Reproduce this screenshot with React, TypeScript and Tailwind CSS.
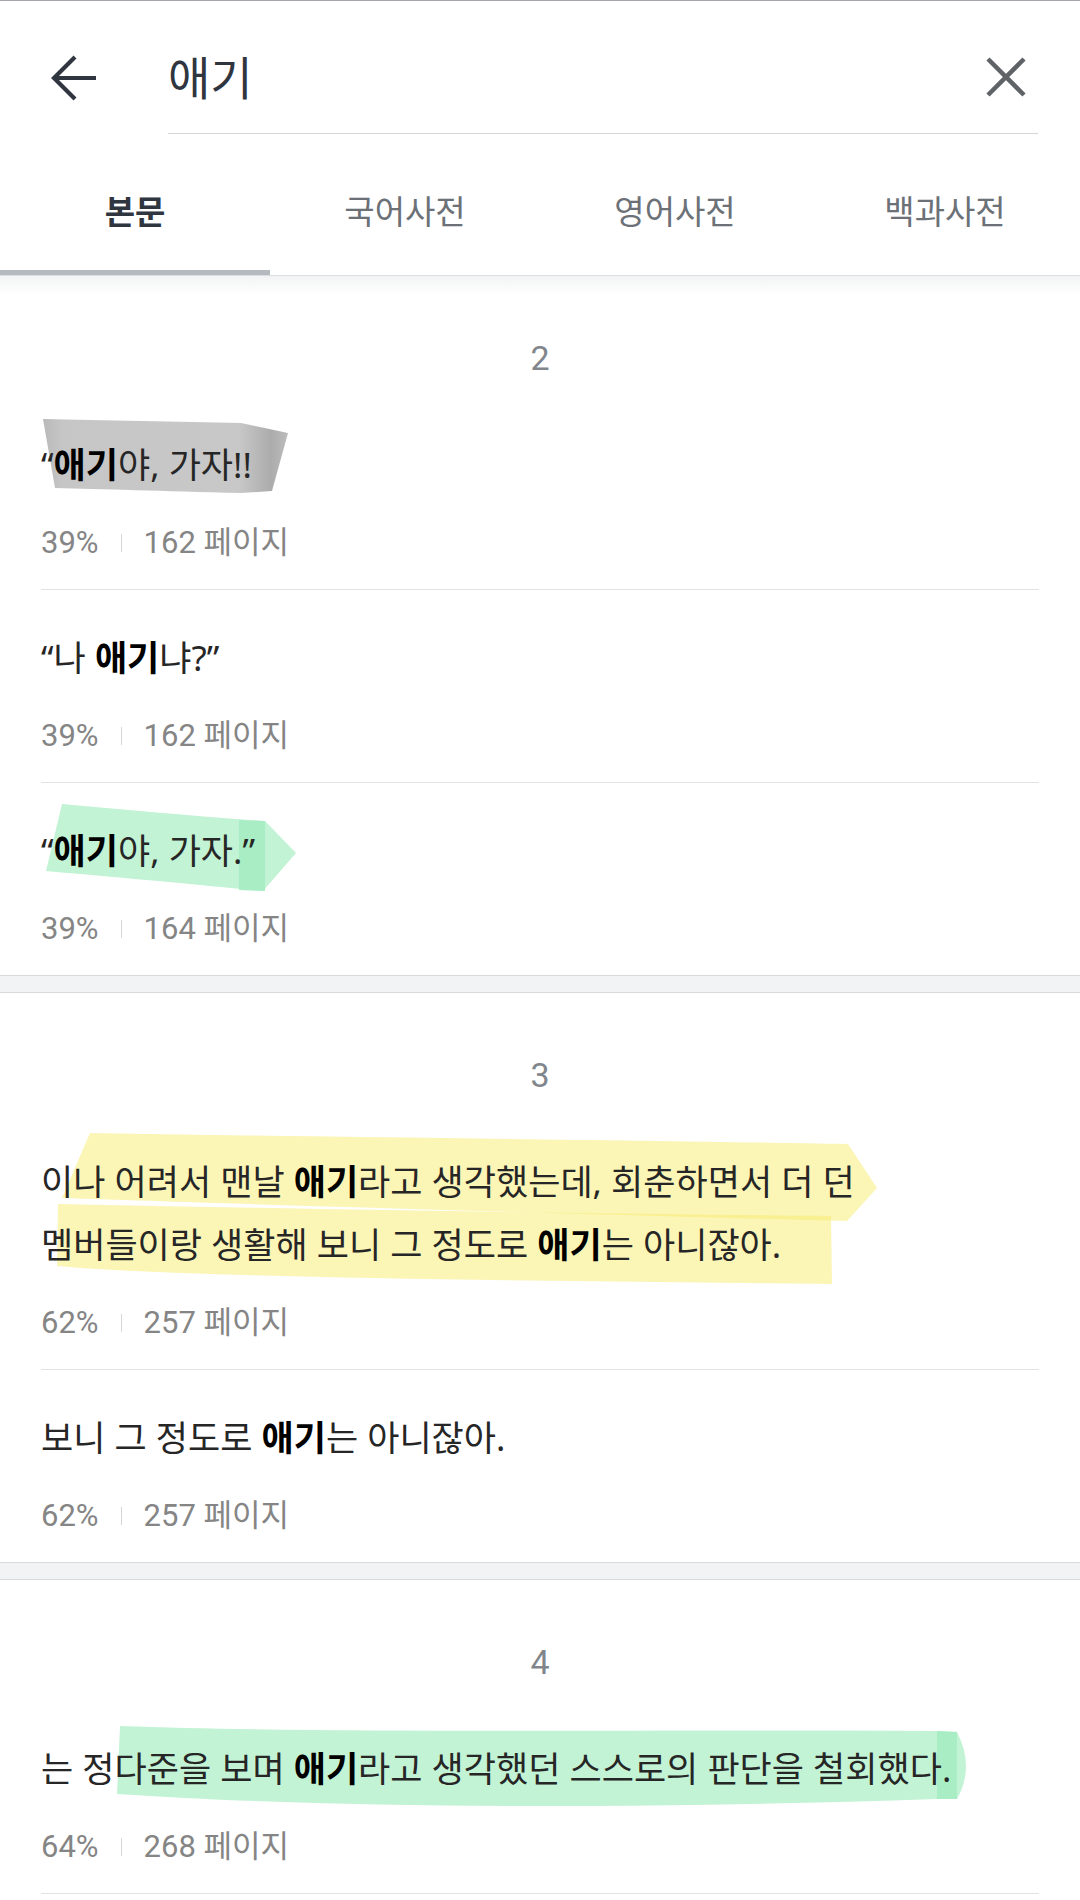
import type { ReactNode } from "react";

const KR = "font-['Noto_Sans','Noto_Sans_CJK_KR',sans-serif]";
const NUM = "font-['Roboto','Noto_Sans_CJK_KR',sans-serif]";

const Em = ({ children }: { children: ReactNode }) => (
  <b className="font-bold text-black">{children}</b>
);

type Row = {
  text: ReactNode;
  pct: string;
  page: string;
  mark?: ReactNode;
};

const Item = ({ row, last }: { row: Row; last: boolean }) => (
  <div className={`pt-[36px] pb-[26px] ${last ? "" : "border-b border-[#e2e3e5]"}`}>
    <div className="relative">
      {row.mark && (
        <svg className="absolute left-0 top-0 w-full h-full overflow-visible pointer-events-none">
          {row.mark}
        </svg>
      )}
      <p className={`relative ${KR} text-[35px] leading-[63px] text-[#262626]`}>{row.text}</p>
    </div>
    <div className={`mt-[27px] h-[40px] flex items-center ${NUM} text-[31px] text-[#858585]`}>
      <span>{row.pct}</span>
      <span className="mx-[22px] w-px h-[18px] bg-[#d6d6d6]" />
      <span>{row.page}</span>
    </div>
  </div>
);

const Section = ({ num, rows, first }: { num: string; rows: Row[]; first?: boolean }) => (
  <section
    className={`px-[41px] pt-[58px] ${first ? "bg-[linear-gradient(to_bottom,#f2f3f4,#ffffff_18px)]" : "bg-white"}`}
  >
    <div className={`h-[48px] leading-[48px] text-center ${NUM} text-[34px] text-[#80868b] mb-[15px]`}>{num}</div>
    {rows.map((r, i) => (
      <Item key={i} row={r} last={i === rows.length - 1} />
    ))}
  </section>
);

const Band = () => <div className="h-[18px] bg-[#f2f3f5] border-y border-[#d9dadd]" />;

const grayMark = (
  <>
    <defs>
      <linearGradient id="gm" x1="0" x2="1" y1="0" y2="0">
        <stop offset="0" stopColor="#b9b9b9" />
        <stop offset="0.08" stopColor="#c6c6c6" />
        <stop offset="0.8" stopColor="#c8c8c8" />
        <stop offset="0.93" stopColor="#acacac" />
        <stop offset="1" stopColor="#bcbcbc" />
      </linearGradient>
    </defs>
    <path d="M2 -14 C60 -13 140 -11 200 -10 L247 0 L231 58 L200 60 C120 58 60 56 14 55 Z" fill="url(#gm)" />
  </>
);

const greenMark = (
  <>
    <path d="M21 -15 C80 -10 150 -3 224 2 L255 34 L222 72 L200 70 C120 62 60 57 5 52 Z" fill="#c3f3d5" />
    <path d="M198 1 L224 2 L224 72 L198 71 Z" fill="#a9edc5" />
  </>
);

const yellowMark = (
  <>
    <path
      d="M49 -17 C200 -14 600 -10 807 -6 L836 38 L806 71 C600 66 200 54 21 48 Z"
      fill="#f7ec6e"
      fillOpacity="0.5"
    />
    <path
      d="M17 54 C300 60 600 64 790 66 L791 134 C500 131 150 128 16 116 Z"
      fill="#f7ec6e"
      fillOpacity="0.5"
    />
  </>
);

const greenMark2 = (
  <>
    <path
      d="M79 -11 C300 -3 600 -8 896 -6 L916 -5 Q934 30 916 62 L896 62 C600 72 300 72 76 57 Z"
      fill="#c3f3d5"
    />
    <path d="M896 -6 L916 -5 L916 62 L896 62 Z" fill="#a9edc5" />
  </>
);

export default function App() {
  return (
    <div className="w-[1080px] min-h-[1900px] bg-white border-t border-[#a3a6aa] overflow-hidden">
      {/* search bar */}
      <div className="flex items-start">
        <div className="w-[168px] h-[133px] pt-[20px] flex items-center pl-[50px]">
          <svg width="48" height="48" viewBox="0 0 48 48" fill="none" stroke="#2f3640" strokeWidth="4.2">
            <path d="M46 24 H4" />
            <path d="M25 3 L4 24 L25 45" />
          </svg>
        </div>
        <div className="flex-1 mr-[42px] h-[133px] pt-[20px] border-b border-[#d4d6d9] flex items-center justify-between pr-[12px]">
          <span className={`${KR} text-[46px] text-[#2f3640]`}>애기</span>
          <svg width="40" height="40" viewBox="0 0 40 40" stroke="#5f6368" strokeWidth="4.5">
            <path d="M2 2 L38 38 M38 2 L2 38" />
          </svg>
        </div>
      </div>

      {/* tabs */}
      <div className={`grid grid-cols-4 h-[142px] border-b border-[#dcdde0] ${KR} text-[33px]`}>
        {["본문", "국어사전", "영어사전", "백과사전"].map((t, i) => (
          <div
            key={t}
            className={`flex items-center justify-center pt-[20px] border-b-[5px] ${
              i === 0 ? "border-[#b4babf] font-bold text-[#2f3640]" : "border-transparent text-[#6c7177]"
            }`}
          >
            {t}
          </div>
        ))}
      </div>

      <Section
        first
        num="2"
        rows={[
          {
            text: (
              <>
                “<Em>애기</Em>야, 가자!!
              </>
            ),
            pct: "39%",
            page: "162 페이지",
            mark: grayMark,
          },
          {
            text: (
              <>
                “나 <Em>애기</Em>냐?”
              </>
            ),
            pct: "39%",
            page: "162 페이지",
          },
          {
            text: (
              <>
                “<Em>애기</Em>야, 가자.”
              </>
            ),
            pct: "39%",
            page: "164 페이지",
            mark: greenMark,
          },
        ]}
      />
      <Band />
      <Section
        num="3"
        rows={[
          {
            text: (
              <>
                이나 어려서 맨날 <Em>애기</Em>라고 생각했는데, 회춘하면서 더 던
                <br />
                멤버들이랑 생활해 보니 그 정도로 <Em>애기</Em>는 아니잖아.
              </>
            ),
            pct: "62%",
            page: "257 페이지",
            mark: yellowMark,
          },
          {
            text: (
              <>
                보니 그 정도로 <Em>애기</Em>는 아니잖아.
              </>
            ),
            pct: "62%",
            page: "257 페이지",
          },
        ]}
      />
      <Band />
      <Section
        num="4"
        rows={[
          {
            text: (
              <>
                는 정다준을 보며 <Em>애기</Em>라고 생각했던 스스로의 판단을 철회했다.
              </>
            ),
            pct: "64%",
            page: "268 페이지",
            mark: greenMark2,
          },
          { text: "", pct: "", page: "" },
        ]}
      />
    </div>
  );
}
